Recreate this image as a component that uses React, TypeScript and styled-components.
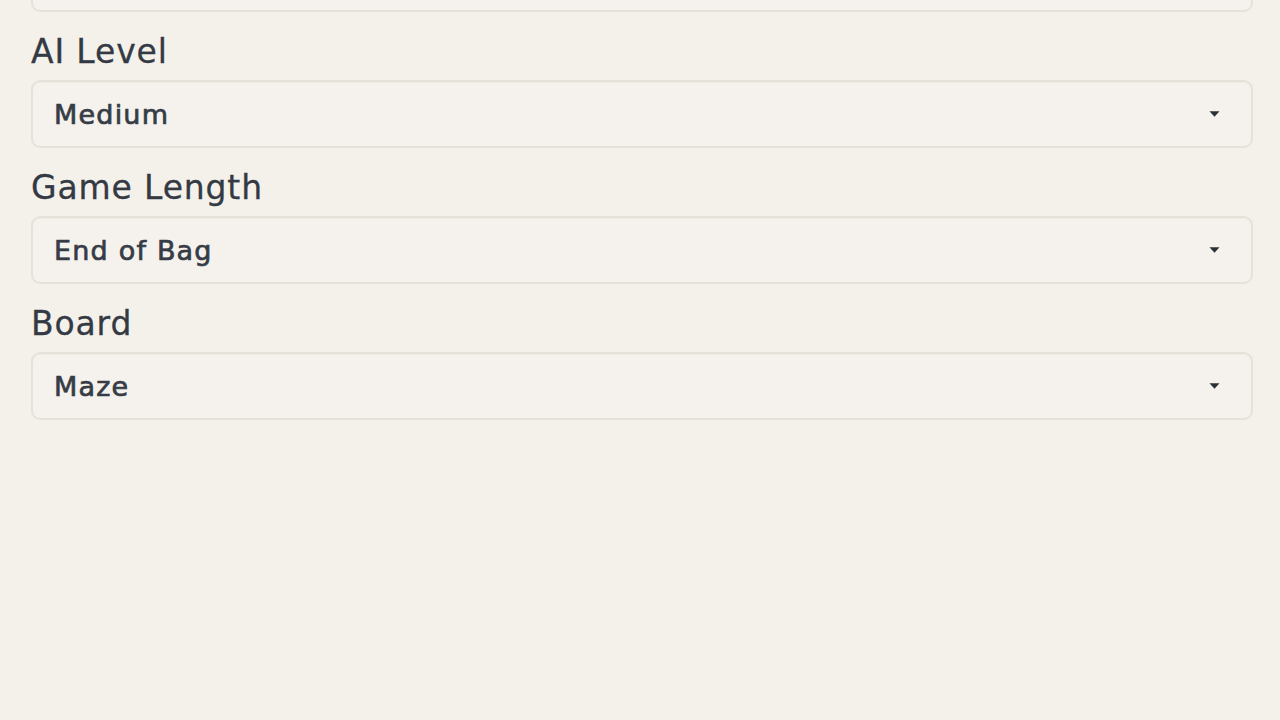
import React from "react";
import styled, { createGlobalStyle } from "styled-components";

const Global = createGlobalStyle`
  html, body {
    margin: 0;
    padding: 0;
    background: #f4f1eb;
    overflow: hidden;
  }
  body {
    font-family: "DejaVu Sans", "Liberation Sans", sans-serif;
    color: #333943;
  }
`;

const Page = styled.div`
  width: 1280px;
  height: 720px;
  background: #f4f1eb;
  overflow: hidden;
`;

const Fields = styled.div`
  display: flex;
  flex-direction: column;
  margin: -56px 27px 0 31px;
`;

const Field = styled.div`
  display: flex;
  flex-direction: column;
`;

const Label = styled.label`
  margin: 20px 0 8px 0;
  font-size: 33px;
  line-height: 40px;
  font-weight: 400;
  color: #343a44;
  letter-spacing: 0.85px;
  -webkit-text-stroke: 0.3px #343a44;
`;

const SelectBox = styled.div`
  box-sizing: border-box;
  height: 68px;
  display: flex;
  align-items: center;
  justify-content: space-between;
  padding: 0 31px 0 21px;
  border: 2px solid #e6e2da;
  border-radius: 9px;
  background: #f5f2ed;
  box-shadow: inset 0 1px 1px rgba(0, 0, 0, 0.03);
`;

const Value = styled.span`
  font-size: 27px;
  font-weight: 400;
  color: #363c46;
  letter-spacing: 1.2px;
  -webkit-text-stroke: 0.7px #363c46;
`;

const Caret = styled.svg`
  width: 11px;
  height: 6px;
  margin-left: auto;
  flex: none;
`;

const fields = [
  { label: "AI Level", value: "Medium" },
  { label: "Game Length", value: "End of Bag" },
  { label: "Board", value: "Maze" },
];

const CaretIcon = () => (
  <Caret viewBox="0 0 11 6">
    <path d="M0.5 0.3 L10.5 0.3 L5.5 5.8 Z" fill="#2b3038" />
  </Caret>
);

export default function App() {
  return (
    <Page>
      <Global />
      <Fields>
        <Field>
          <SelectBox>
            <CaretIcon />
          </SelectBox>
        </Field>
        {fields.map((f) => (
          <Field key={f.label}>
            <Label>{f.label}</Label>
            <SelectBox>
              <Value>{f.value}</Value>
              <CaretIcon />
            </SelectBox>
          </Field>
        ))}
      </Fields>
    </Page>
  );
}
